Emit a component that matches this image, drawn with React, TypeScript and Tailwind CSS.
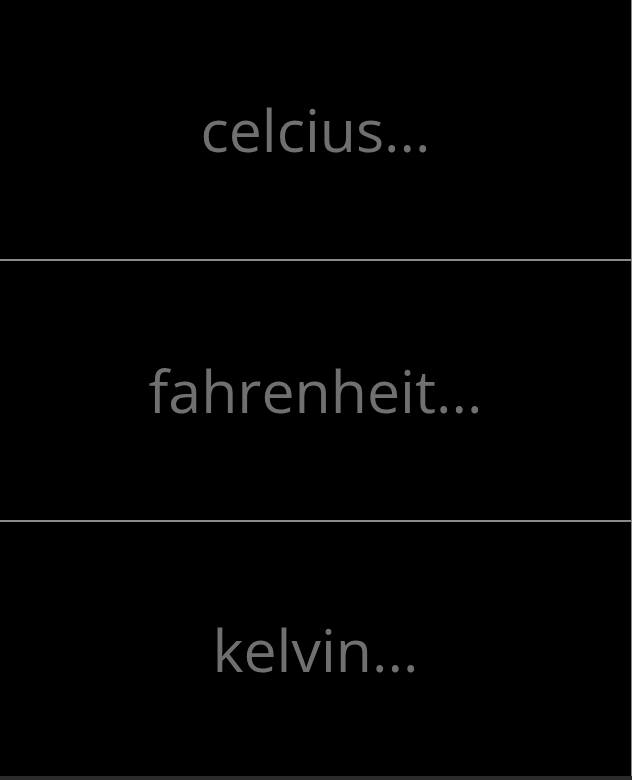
export default function App() {
  const units = ['celcius...', 'fahrenheit...', 'kelvin...'];
  return (
    <div className="h-[780px] w-[632px] bg-[#2b2b2b]">
      <div className="flex h-[776px] flex-col border-r border-[#8a8a8a] bg-black">
        {units.map((unit, i) => (
          <div
            key={unit}
            className={`flex items-center justify-center ${
              i < units.length - 1 ? 'h-[261px] border-b-2 border-[#8a8a8a]' : 'flex-1'
            }`}
          >
            <span className="font-['Open_Sans',sans-serif] text-[59px] leading-none text-[#707070]">
              {unit}
            </span>
          </div>
        ))}
      </div>
    </div>
  );
}
